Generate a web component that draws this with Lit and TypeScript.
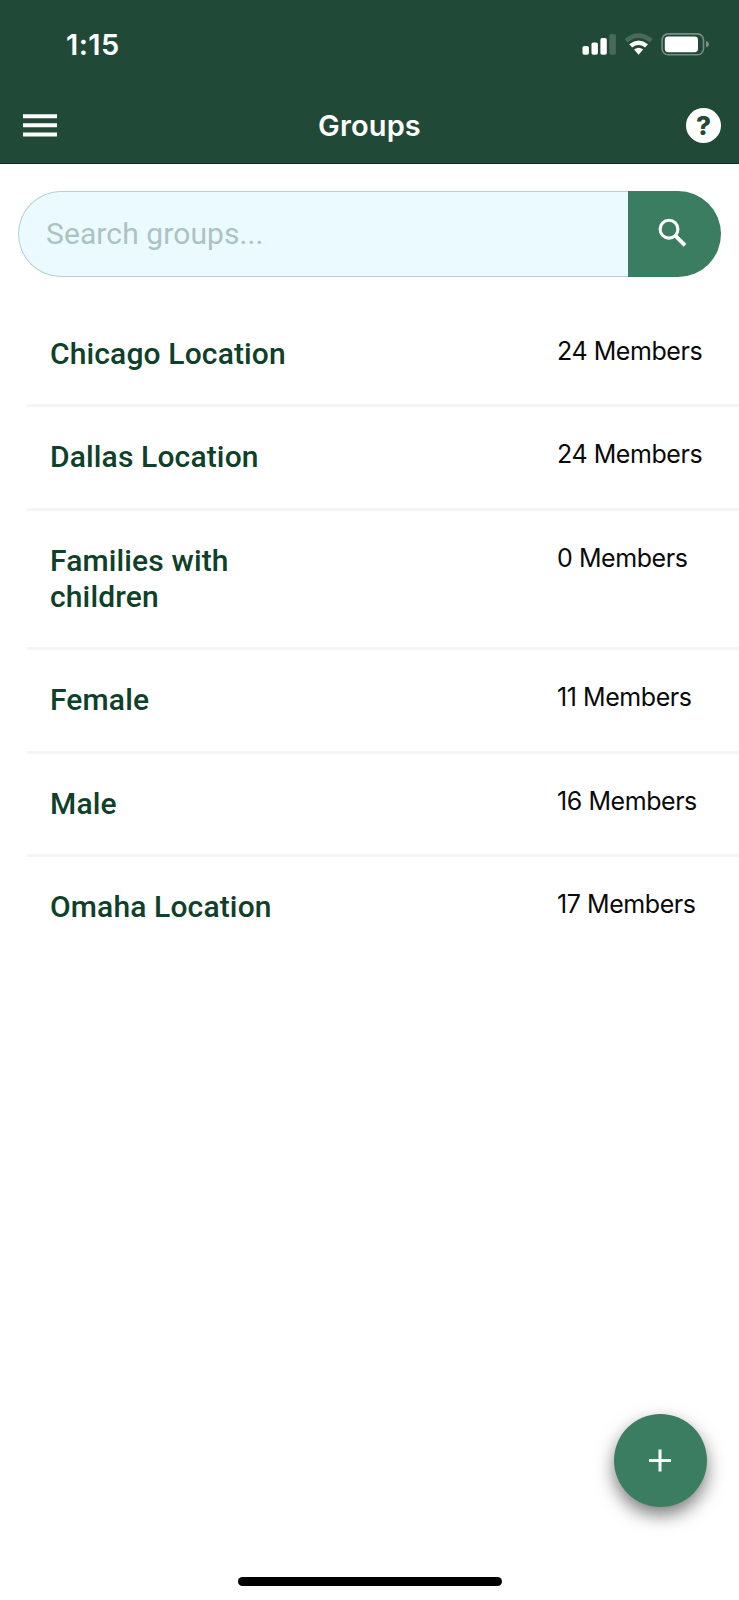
import { LitElement, html, css } from "lit";
import { customElement, property } from "lit/decorators.js";

interface Group {
  name: string;
  members: number;
}

const GROUPS: Group[] = [
  { name: "Chicago Location", members: 24 },
  { name: "Dallas Location", members: 24 },
  { name: "Families with children", members: 0 },
  { name: "Female", members: 11 },
  { name: "Male", members: 16 },
  { name: "Omaha Location", members: 17 },
];

@customElement("status-bar")
class StatusBar extends LitElement {
  static styles = css`
    :host {
      display: flex;
      justify-content: space-between;
      height: 86px;
      box-sizing: border-box;
      padding: 26px 29px 0 66px;
      color: #fff;
    }
    .time {
      font: 600 29px/38px Inter, sans-serif;
      letter-spacing: 0.4px;
    }
    .icons {
      display: block;
      width: 128px;
      height: 36px;
    }
  `;
  render() {
    return html`
      <span class="time">1:15</span>
      <svg class="icons" viewBox="0 0 128 36" fill="#fff">
        <rect x="0.5" y="20" width="6.4" height="8.8" rx="1.8" />
        <rect x="9.5" y="16.5" width="6.4" height="12.3" rx="1.8" />
        <rect x="18.4" y="12" width="6.4" height="16.8" rx="1.8" />
        <rect x="27.3" y="8" width="6.6" height="20.8" rx="1.8" opacity="0.18" />
        <path d="M42.5 13.1Q56.6 1.5 70.7 13.1L67.6 16.4Q56.6 7.6 45.6 16.4Z" opacity="0.18" />
        <path d="M47.2 18.2Q56.6 11 66 18.2L63 21.4Q56.6 16.8 50.2 21.4Z" />
        <path d="M52 23.6Q56.6 20 61.2 23.6L56.6 28.8Z" />
        <rect x="80.1" y="7.9" width="41.4" height="20.8" rx="6" fill="none" stroke="#fff" stroke-width="1.6" opacity="0.38" />
        <rect x="82.8" y="10.4" width="33.2" height="15.8" rx="3.4" />
        <path d="M124 14.8Q127 16 127 18.2T124 21.6Z" opacity="0.4" />
      </svg>
    `;
  }
}

@customElement("title-bar")
class TitleBar extends LitElement {
  static styles = css`
    :host {
      display: grid;
      grid-template-columns: 35px 1fr 35px;
      align-items: center;
      height: 78px;
      box-sizing: border-box;
      padding: 2px 18px 0 23px;
      border-bottom: 1px solid #0d2b1e;
      color: #fff;
    }
    svg {
      display: block;
      width: 35px;
      height: 35px;
    }
    .title {
      margin: 0;
      padding-right: 5px;
      text-align: center;
      font: 600 29px/36px Inter, sans-serif;
      letter-spacing: 0.15px;
    }
    .help {
      display: grid;
      place-items: center;
      width: 35px;
      height: 35px;
      border-radius: 50%;
      background: #fff;
      color: #214937;
      font: 800 26px/35px Inter, sans-serif;
    }
  `;
  render() {
    return html`
      <svg viewBox="0 0 35 35" fill="#fff">
        <path d="M0 6.2h34v4H0zM0 15.3h34v4H0zM0 24.6h34v4H0z" />
      </svg>
      <h1 class="title">Groups</h1>
      <span class="help">?</span>
    `;
  }
}

@customElement("search-field")
class SearchField extends LitElement {
  static styles = css`
    :host {
      display: flex;
      height: 86px;
      margin: 27px 18.4px 0 18px;
    }
    .field {
      flex: 1;
      display: flex;
      align-items: center;
      box-sizing: border-box;
      padding-left: 27px;
      border: 1px solid #b5d0cf;
      border-right: 0;
      border-radius: 43px 0 0 43px;
      background: #ebfaff;
      color: #abc3c2;
      font: 400 30px/36px Roboto, sans-serif;
      letter-spacing: 0.1px;
    }
    .button {
      display: grid;
      place-items: center;
      width: 93px;
      border-radius: 0 43px 43px 0;
      background: #3b7d60;
    }
    svg {
      display: block;
      width: 38px;
      height: 38px;
    }
  `;
  render() {
    return html`
      <div class="field">Search groups...</div>
      <div class="button">
        <svg viewBox="0 0 38 38" fill="none" stroke="#fff">
          <circle cx="14" cy="14.2" r="8.9" stroke-width="3.1" />
          <path d="M20.3 20.7L30 30.4" stroke-width="3.9" />
        </svg>
      </div>
    `;
  }
}

@customElement("group-row")
class GroupRow extends LitElement {
  @property({ attribute: false }) group!: Group;
  static styles = css`
    :host {
      display: grid;
      grid-template-columns: 240px auto;
      justify-content: space-between;
      align-items: start;
      padding: 32px 0 32.6px 23px;
    }
    .name {
      color: #0f4029;
      font: 500 30px/36px Roboto, sans-serif;
      letter-spacing: 0.14px;
    }
    .count {
      width: 182px;
      color: #0a0a0a;
      font: 400 25px/30px Inter, sans-serif;
      letter-spacing: -0.44px;
    }
  `;
  render() {
    return html`
      <span class="name">${this.group.name}</span>
      <span class="count">${this.group.members} Members</span>
    `;
  }
}

@customElement("app-root")
class AppRoot extends LitElement {
  static styles = css`
    :host {
      display: flex;
      flex-direction: column;
      position: relative;
      height: 1600px;
      background: #fff;
      overflow: hidden;
    }
    .header {
      background: #214937;
    }
    .list {
      flex: 1;
      margin: 26.5px 0 0 27px;
    }
    .row + .row {
      border-top: 3px solid #f5f5f5;
    }
    .fab {
      position: absolute;
      right: 32px;
      bottom: 93px;
      display: grid;
      place-items: center;
      width: 93px;
      height: 93px;
      border-radius: 50%;
      background: #3b7d60;
      box-shadow: 0 8px 18px rgba(0, 0, 0, 0.52);
    }
    .plus {
      width: 24px;
      height: 24px;
    }
    .home {
      align-self: center;
      width: 264px;
      height: 9px;
      margin-bottom: 14px;
      border-radius: 5px;
      background: #000;
    }
  `;
  render() {
    return html`
      <div class="header">
        <status-bar></status-bar>
        <title-bar></title-bar>
      </div>
      <search-field></search-field>
      <div class="list">
        ${GROUPS.map((g) => html`<div class="row"><group-row .group=${g}></group-row></div>`)}
      </div>
      <div class="fab">
        <svg class="plus" viewBox="0 0 24 24" stroke="#fff" stroke-width="3">
          <path d="M0 11.5H22M11 0.5V22.5" />
        </svg>
      </div>
      <div class="home"></div>
    `;
  }
}
